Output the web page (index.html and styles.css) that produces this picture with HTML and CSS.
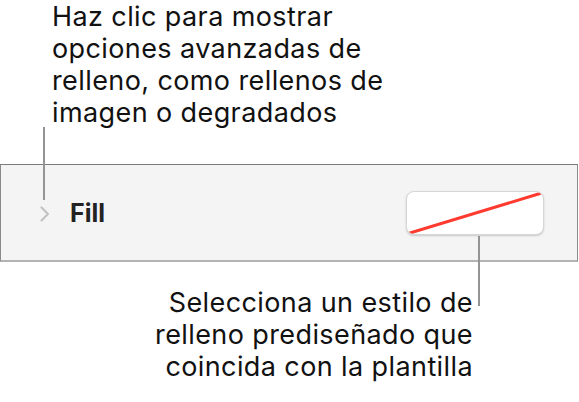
FILE: index.html
```html
<!DOCTYPE html>
<html lang="es">
<head>
<meta charset="utf-8">
<link rel="stylesheet" href="styles.css">
</head>
<body>
<div class="figure">
  <p class="note note-top">Haz clic para mostrar<br>opciones avanzadas de<br>relleno, como rellenos de<br>imagen o degradados</p>

  <div class="panel">
    <span class="chevron">
      <svg width="12" height="18" viewBox="0 0 12 18"><path d="M2.5 2.5 L9 9 L2.5 15.5" fill="none" stroke="#c2c2c2" stroke-width="2.2" stroke-linecap="round" stroke-linejoin="round"/></svg>
    </span>
    <span class="label">Fill</span>
    <button class="swatch" type="button">
      <svg class="swatch-line" width="138" height="44" viewBox="0 0 138 44"><line x1="4" y1="42" x2="134" y2="2.5" stroke="#ff3b30" stroke-width="3" stroke-linecap="round"/></svg>
    </button>
  </div>

  <p class="note note-bottom">Selecciona un estilo de<br>relleno prediseñado que<br>coincida con la plantilla</p>

  <span class="leader leader-left"></span>
  <span class="leader leader-right"></span>
</div>
</body>
</html>
```
FILE: styles.css
```css
html, body {
  margin: 0;
  padding: 0;
  background: #ffffff;
}

.figure {
  position: relative;
  width: 579px;
  height: 402px;
  font-family: Inter, "Noto Sans", sans-serif;
  color: #111111;
}

.note {
  margin: 0;
  font-size: 27px;
  line-height: 32px;
  letter-spacing: 0.4px;
}

.note-top {
  box-sizing: border-box;
  padding: 1px 0 0 52px;
  height: 164px;
}

.panel {
  box-sizing: border-box;
  height: 98px;
  width: 578px;
  background: #f4f4f4;
  border-top: 1px solid #7a7a7a;
  border-left: 1px solid #8a8a8a;
  border-right: 1px solid #8a8a8a;
  border-bottom: 2px solid #b3b3b3;
  display: flex;
  align-items: center;
  padding-left: 38px;
}

.chevron {
  display: flex;
  width: 12px;
  height: 18px;
  margin-top: 3px;
}

.label {
  margin-left: 19px;
  font-size: 25px;
  font-weight: 700;
  letter-spacing: 0;
  color: #222222;
}

.swatch {
  box-sizing: border-box;
  margin-left: auto;
  margin-right: 33px;
  margin-top: 1px;
  width: 138px;
  height: 44px;
  padding: 0;
  border: 1px solid #d6d6d6;
  border-radius: 8px;
  background: #ffffff;
  box-shadow: 0 1px 2px rgba(0, 0, 0, 0.18);
  overflow: hidden;
  display: block;
}

.swatch-line {
  display: block;
  margin: -1px;
}

.note-bottom {
  text-align: right;
  width: 473px;
  padding-top: 25px;
}

.leader {
  position: absolute;
  width: 2px;
  background: #949494;
}

.leader-left {
  left: 43px;
  top: 127px;
  height: 73px;
}

.leader-right {
  left: 478px;
  top: 236px;
  height: 70px;
}
```
